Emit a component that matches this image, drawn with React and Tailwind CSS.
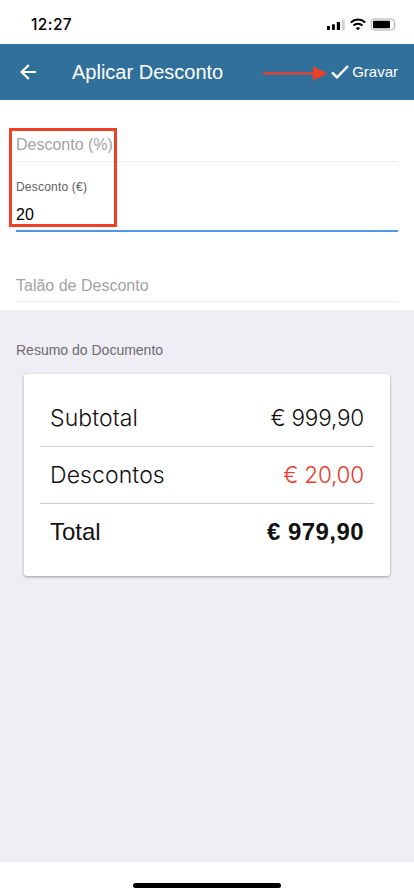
function StatusBar() {
  return (
    <div className="flex h-11 items-start justify-between pl-[31px] pr-[17px]">
      <span className="mt-[15px] w-[42px] whitespace-nowrap font-[Inter,sans-serif] text-[15.5px] font-medium leading-5 tracking-[0.4px] text-black">12:27</span>
      <svg className="mt-[18px]" width="70" height="13" viewBox="0 0 70 13">
        <rect x="0" y="8" width="2.9" height="4" rx=".6" />
        <rect x="5" y="6.3" width="2.9" height="5.7" rx=".6" />
        <rect x="9.8" y="4" width="3.2" height="8" rx=".6" />
        <rect x="14.8" y="1.2" width="3" height="10.8" rx=".6" fill="#d2d2d2" />
        <g fill="none" stroke="#000" strokeWidth="2">
          <path d="M23.8 4.4a10.6 10.6 0 0 1 14.4 0" />
          <path d="M26.5 7.5a6.5 6.5 0 0 1 9 0" />
        </g>
        <path d="M28.8 10q2.2-1.6 4.4 0L31 12.2z" />
        <rect x="44.2" y="1" width="23.2" height="11" rx="3" fill="#fff" stroke="#a9a9a9" />
        <rect x="46" y="2.8" width="17" height="7.4" rx="1" />
        <path d="M68.6 4.9q1.4 1.6 0 3.2z" fill="#999" />
      </svg>
    </div>
  );
}

function Header() {
  return (
    <header className="flex h-14 items-center bg-[#31709b] pl-5 pr-4 text-white">
      <svg width="17" height="16" viewBox="0 0 17 16" fill="none" stroke="currentColor" strokeWidth="2.2">
        <path d="M16 8H2M8.7 1L1.7 8l7 7" />
      </svg>
      <h1 className="ml-[35px] whitespace-nowrap text-xl">Aplicar Desconto</h1>
      <svg className="ml-auto mr-[3px] mt-[3px]" width="66" height="16" viewBox="0 0 66 16">
        <path d="M1 7.4H53" stroke="#ee4026" strokeWidth="2.4" />
        <path d="M51 .2L65.3 7.4L51 14.8z" fill="#ee4026" />
      </svg>
      <svg width="18" height="14" viewBox="0 0 18 14" fill="none" stroke="currentColor" strokeWidth="2.4">
        <path d="M1 7.4l5 5L17 1" />
      </svg>
      <button className="ml-[3px] text-[15px]">Gravar</button>
    </header>
  );
}

function Row({ label, value, labelClass, valueClass }) {
  return (
    <div className="flex h-[57px] items-center justify-between px-2.5 text-2xl">
      <span className={labelClass}>{label}</span>
      <span className={valueClass}>{value}</span>
    </div>
  );
}

export default function App() {
  return (
    <div className="flex h-[896px] w-[414px] flex-col overflow-hidden bg-white font-['Liberation_Sans',Arial,sans-serif]">
      <StatusBar />
      <Header />
      <section className="h-[210px] px-4 pt-9">
        <div className="relative h-[26px] border-b border-[#eeeeee] text-base leading-[18px] text-[#a3a3a3]">
          Desconto (%)
          <div className="absolute -left-[7px] -top-[8px] h-[99px] w-[108px] border-3 border-[#ee4026]" />
        </div>
        <div className="flex h-[70px] flex-col border-b-2 border-[#5096e8]">
          <label className="mt-[18px] text-xs leading-[14px] tracking-[0.2px] text-[#606060]">Desconto (€)</label>
          <span className="mt-[12px] text-base leading-[18px] text-black">20</span>
        </div>
        <div className="mt-[45px] h-[25px] border-b border-[#eeeeee] text-base leading-[18px] text-[#a3a3a3]">Talão de Desconto</div>
      </section>
      <main className="flex h-[552px] flex-col bg-[#efeef4] px-4 pt-8">
        <h2 className="text-sm leading-4 text-[#6b6b6f]">Resumo do Documento</h2>
        <div className="mx-2 mt-4 h-[202px] rounded-[3px] bg-white px-4 pt-4 shadow-[0_1px_3px_rgba(0,0,0,0.35)]">
          <div className="divide-y divide-[#cccccc]">
            <Row label="Subtotal" value="€ 999,90" labelClass="font-[Inter,sans-serif] text-[23px] font-light tracking-[0.1px] text-[#111111]" valueClass="font-[Inter,sans-serif] text-[22.5px] font-light -tracking-[0.2px] text-[#111111]" />
            <Row label="Descontos" value="€ 20,00" labelClass="font-[Inter,sans-serif] text-[23px] font-light tracking-[0.1px] text-[#111111]" valueClass="font-[Inter,sans-serif] text-[22.5px] font-light -tracking-[0.2px] text-[#e73c2f]" />
            <Row label="Total" value="€ 979,90" labelClass="pb-0.5 text-[#111111]" valueClass="pb-0.5 font-bold tracking-[0.45px] text-[#111111]" />
          </div>
        </div>
      </main>
      <footer className="flex flex-1 justify-center pt-[21px]">
        <div className="h-[5px] w-[148px] rounded-full bg-black" />
      </footer>
    </div>
  );
}
